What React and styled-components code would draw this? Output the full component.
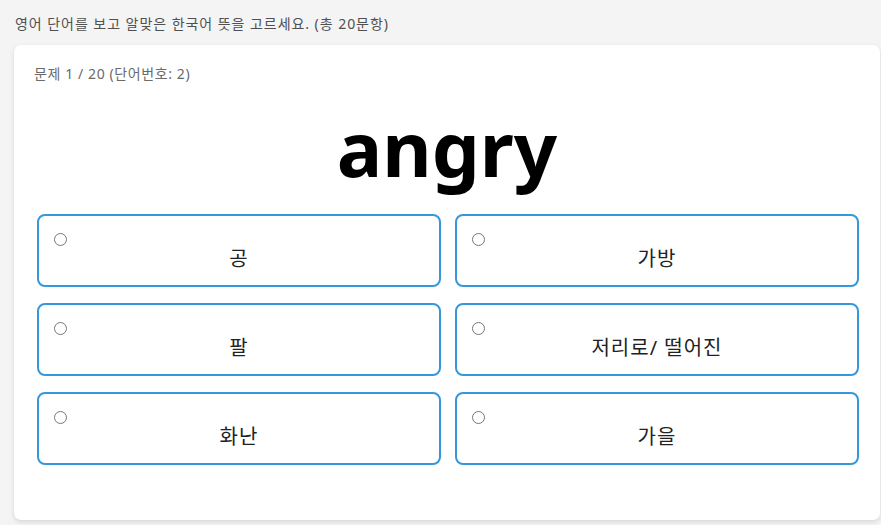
import React from 'react'
import styled, { createGlobalStyle } from 'styled-components'

const GlobalStyle = createGlobalStyle`
  html, body {
    margin: 0;
    padding: 0;
    background: #f4f4f4;
    font-family: 'Noto Sans', 'Noto Sans CJK KR', sans-serif;
  }
`

const Page = styled.div`
  padding: 15px 1px 5px 14px;
`

const Guide = styled.p`
  margin: 0 0 12px 1px;
  font-size: 14px;
  line-height: 18px;
  letter-spacing: 0.95px;
  color: #505050;
`

const Card = styled.section`
  background: #fff;
  border-radius: 7px;
  box-shadow: 0 2px 5px rgba(0, 0, 0, 0.12);
  padding: 20px 20px 55px 20px;
`

const Counter = styled.div`
  font-size: 14px;
  line-height: 18px;
  letter-spacing: 0.6px;
  color: #6a6a6a;
`

const Word = styled.h1`
  margin: 17px 0 18px;
  text-align: center;
  font-size: 76px;
  line-height: 96px;
  font-weight: 700;
  color: #000;
`

const Choices = styled.div`
  display: grid;
  grid-template-columns: 1fr 1fr;
  column-gap: 14px;
  row-gap: 16px;
  margin: 0 1px 0 3px;
`

const Choice = styled.label`
  display: flex;
  flex-direction: column;
  border: 2px solid #3498db;
  border-radius: 8px;
  padding: 17px 15px 14px;
  cursor: pointer;
  background: #fff;
`

const Radio = styled.input`
  appearance: none;
  margin: 0;
  width: 13px;
  height: 13px;
  border: 1px solid #767676;
  border-radius: 50%;
  background: #fff;
  box-sizing: border-box;
  align-self: flex-start;
`

const ChoiceText = styled.span`
  margin-top: 1px;
  text-align: center;
  font-size: 20px;
  line-height: 24px;
  letter-spacing: 1px;
  color: #222;
`

const choices = ['공', '가방', '팔', '저리로/ 떨어진', '화난', '가을']

export default function App() {
  return (
    <>
      <GlobalStyle />
      <Page>
        <Guide>영어 단어를 보고 알맞은 한국어 뜻을 고르세요. (총 20문항)</Guide>
        <Card>
          <Counter>문제 1 / 20 (단어번호: 2)</Counter>
          <Word>angry</Word>
          <Choices>
            {choices.map((c) => (
              <Choice key={c}>
                <Radio type="radio" name="answer" value={c} />
                <ChoiceText>{c}</ChoiceText>
              </Choice>
            ))}
          </Choices>
        </Card>
      </Page>
    </>
  )
}
